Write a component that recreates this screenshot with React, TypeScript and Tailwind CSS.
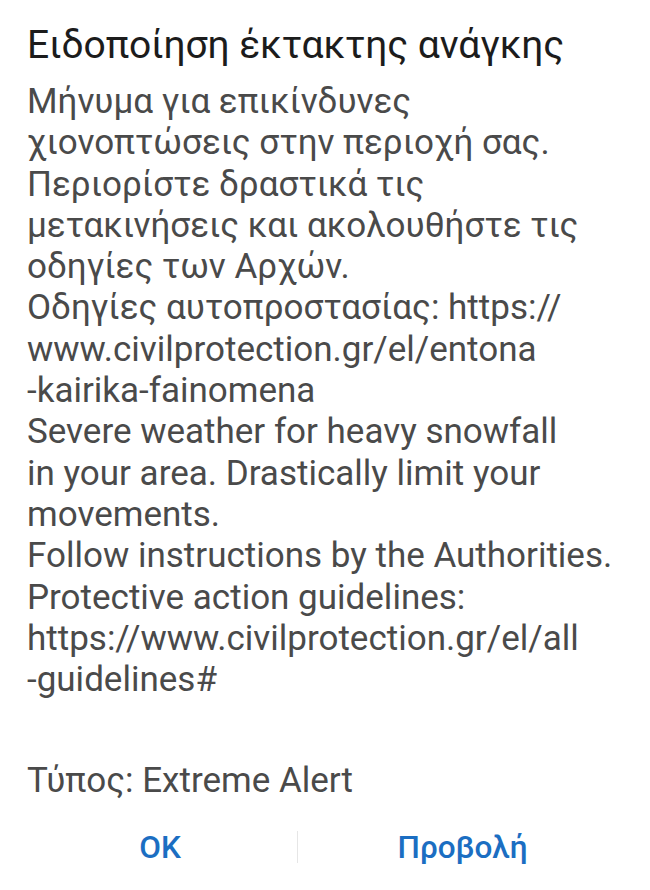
export default function App() {
  const lines = [
    'Μήνυμα για επικίνδυνες',
    'χιονοπτώσεις στην περιοχή σας.',
    'Περιορίστε δραστικά τις',
    'μετακινήσεις και ακολουθήστε τις',
    'οδηγίες των Αρχών.',
    'Οδηγίες αυτοπροστασίας: https://',
    'www.civilprotection.gr/el/entona',
    '-kairika-fainomena',
    'Severe weather for heavy snowfall',
    'in your area. Drastically limit your',
    'movements.',
    'Follow instructions by the Authorities.',
    'Protective action guidelines:',
    'https://www.civilprotection.gr/el/all',
    '-guidelines#',
  ];

  return (
    <div
      className="w-[650px] h-[890px] bg-white overflow-hidden"
      style={{ fontFamily: 'Roboto, "Noto Sans", sans-serif' }}
    >
      {/* Τίτλος */}
      <div className="px-[27px] pt-[20px]">
        <h1 className="text-[39px] leading-[50px] text-[#1c1c1c] whitespace-nowrap tracking-[-0.1px]">
          Ειδοποίηση έκτακτης ανάγκης
        </h1>
      </div>

      {/* Κείμενο μηνύματος */}
      <div className="px-[27px] pt-[11px] text-[35px] leading-[41.3px] text-[#4a4a4a]">
        {lines.map((line, i) => (
          <div key={i} className="whitespace-nowrap">
            {line}
          </div>
        ))}
        <div className="mt-[60px] whitespace-nowrap">Τύπος: Extreme Alert</div>
      </div>

      {/* Κουμπιά */}
      <div className="mt-[22px] px-[23px] grid grid-cols-[274px_1px_1fr] items-center h-[44px]">
        <button className="text-[31.5px] font-medium text-[#1b6ec2] text-center">OK</button>
        <div className="h-[32px] bg-[#e6e6e6]" />
        <button className="text-[31.5px] font-medium text-[#1b6ec2] text-center">Προβολή</button>
      </div>
    </div>
  );
}
